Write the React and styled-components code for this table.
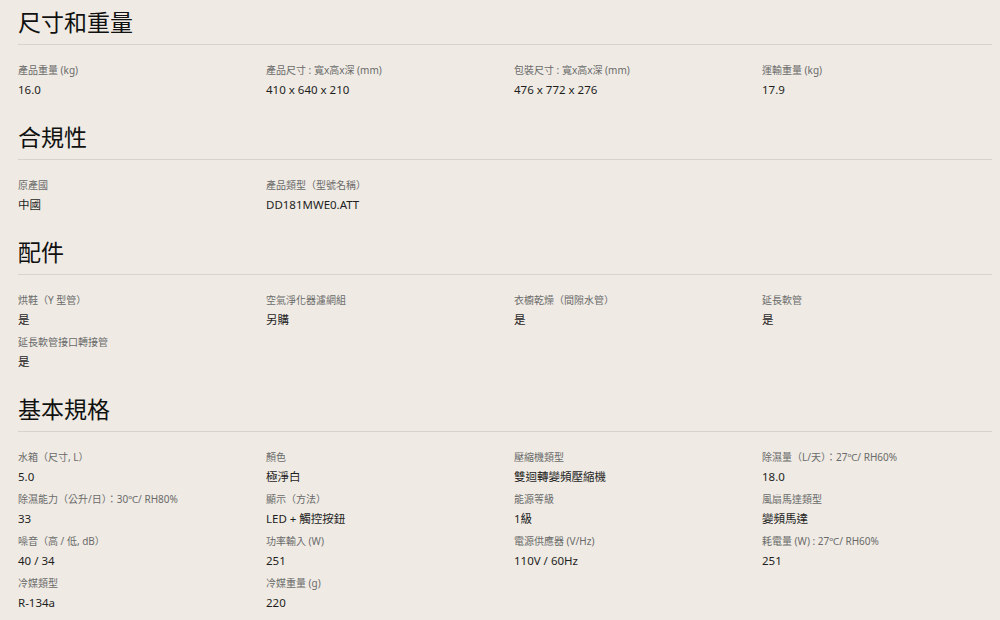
import React from "react";
import styled, { createGlobalStyle } from "styled-components";

const Global = createGlobalStyle`
  html, body { margin: 0; padding: 0; background: #efebe4; }
  body {
    font-family: "Noto Sans", "Noto Sans CJK TC", sans-serif;
    color: #222;
  }
`;

const Page = styled.div`
  width: 974px;
  padding: 7px 0 0 18px;
  display: flex;
  flex-direction: column;
  gap: 22px;
`;

const Section = styled.section`
  display: flex;
  flex-direction: column;
`;

const Heading = styled.h2`
  margin: 0;
  font-size: 23px;
  line-height: 30px;
  font-weight: 400;
  color: #111;
  padding-bottom: 7px;
  border-bottom: 1px solid #d7d3cd;
`;

const Grid = styled.div`
  display: grid;
  grid-template-columns: repeat(4, 1fr);
  column-gap: 18px;
  row-gap: 4px;
  padding-top: 17px;
`;

const Item = styled.div`
  display: flex;
  flex-direction: column;
`;

const Label = styled.div`
  font-size: 10px;
  line-height: 16px;
  color: #6a6a6a;
  white-space: nowrap;
`;

const Value = styled.div`
  margin-top: 2px;
  font-size: 11.5px;
  line-height: 20px;
  color: #1e1e1e;
`;

const sections = [
  {
    title: "尺寸和重量",
    items: [
      ["產品重量 (kg)", "16.0"],
      ["產品尺寸 : 寬x高x深 (mm)", "410 x 640 x 210"],
      ["包裝尺寸 : 寬x高x深 (mm)", "476 x 772 x 276"],
      ["運輸重量 (kg)", "17.9"],
    ],
  },
  {
    title: "合規性",
    items: [
      ["原產國", "中國"],
      ["產品類型（型號名稱）", "DD181MWE0.ATT"],
    ],
  },
  {
    title: "配件",
    items: [
      ["烘鞋（Y 型管）", "是"],
      ["空氣淨化器濾網組", "另購"],
      ["衣櫥乾燥（間隙水管）", "是"],
      ["延長軟管", "是"],
      ["延長軟管接口轉接管", "是"],
    ],
  },
  {
    title: "基本規格",
    items: [
      ["水箱（尺寸, L）", "5.0"],
      ["顏色", "極淨白"],
      ["壓縮機類型", "雙迴轉變頻壓縮機"],
      ["除濕量（L/天）：27℃/ RH60%", "18.0"],
      ["除濕能力（公升/日）：30℃/ RH80%", "33"],
      ["顯示（方法）", "LED + 觸控按鈕"],
      ["能源等級", "1級"],
      ["風扇馬達類型", "變頻馬達"],
      ["噪音（高 / 低, dB）", "40 / 34"],
      ["功率輸入 (W)", "251"],
      ["電源供應器 (V/Hz)", "110V / 60Hz"],
      ["耗電量 (W) : 27℃/ RH60%", "251"],
      ["冷媒類型", "R-134a"],
      ["冷媒重量 (g)", "220"],
    ],
  },
];

export default function App() {
  return (
    <>
      <Global />
      <Page>
        {sections.map((s) => (
          <Section key={s.title}>
            <Heading>{s.title}</Heading>
            <Grid>
              {s.items.map(([l, v]) => (
                <Item key={l}>
                  <Label>{l}</Label>
                  <Value>{v}</Value>
                </Item>
              ))}
            </Grid>
          </Section>
        ))}
      </Page>
    </>
  );
}
